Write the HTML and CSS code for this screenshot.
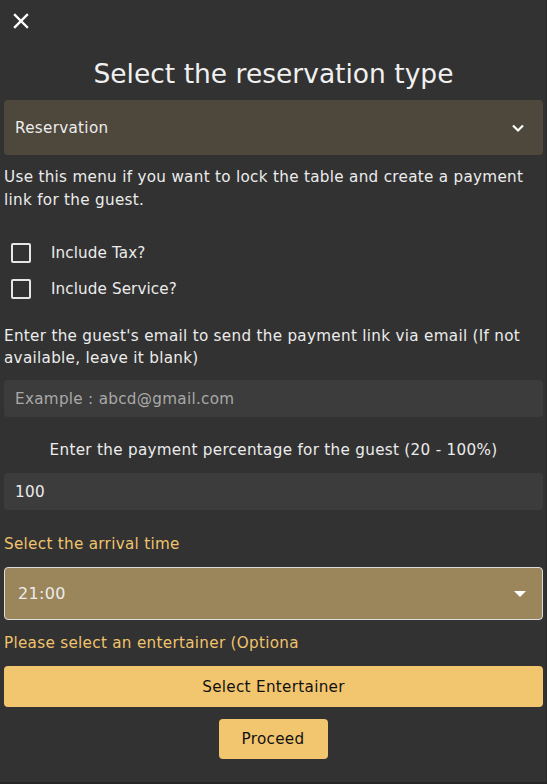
FILE: index.html
```html
<!DOCTYPE html>
<html>
<head>
    <meta charset="UTF-8">
    <title>Reservation type</title>
    <meta name="viewport" content="width=device-width, initial-scale=1.0">
    <link rel="stylesheet" href="styles.css">
</head>
<body>
    <div class="sheet">
        <div class="close">
            <svg width="16" height="16" viewBox="0 0 16 16">
                <path d="M2 2 L14 14 M14 2 L2 14" stroke="#fff" stroke-width="2.4" stroke-linecap="square"/>
            </svg>
        </div>

        <h1 class="title">Select the reservation type</h1>

        <div class="typeSelect">
            <span>Reservation</span>
            <svg width="14" height="10" viewBox="0 0 14 10">
                <path d="M2 2.5 L7 7.5 L12 2.5" fill="none" stroke="#fff" stroke-width="2.2"/>
            </svg>
        </div>

        <p class="text info">Use this menu if you want to lock the table and create a payment link for the guest.</p>

        <div class="checks">
            <label class="check"><span class="box"></span>Include Tax?</label>
            <label class="check"><span class="box"></span>Include Service?</label>
        </div>

        <p class="text emailText">Enter the guest's email to send the payment link via email (If not available, leave it blank)</p>
        <div class="field placeholder">Example : abcd@gmail.com</div>

        <p class="text centered">Enter the payment percentage for the guest (20 - 100%)</p>
        <div class="field">100</div>

        <p class="text gold arrival">Select the arrival time</p>
        <div class="timeSelect">
            <span>21:00</span>
            <svg width="12" height="7" viewBox="0 0 12 7">
                <path d="M0 0 L12 0 L6 6 Z" fill="#fff"/>
            </svg>
        </div>

        <p class="text gold entertainer">Please select an entertainer (Optiona</p>
        <div class="btnWide">Select Entertainer</div>
        <div class="proceedRow">
            <div class="btnProceed">Proceed</div>
        </div>
    </div>
</body>
</html>
```

FILE: styles.css
```css
*{
    box-sizing: border-box;
}
body{
    margin: 0;
    background-color: #323232;
    color: #ececec;
    font-family: "DejaVu Sans", sans-serif;
    font-size: 15.2px;
    letter-spacing: 0.3px;
    height: 784px;
    overflow: hidden;
    border-bottom: solid #262626 2px;
    border-right: solid #2a2a2a 1px;
}
.sheet{
    padding: 0 3px 0 4px;
}
.close{
    padding: 13px 0 0 9px;
    height: 29px;
}
.close svg{
    display: block;
}
.title{
    margin: 27px 0 8px 0;
    text-align: center;
    font-size: 26.5px;
    font-weight: normal;
    letter-spacing: 0;
    line-height: 36px;
    color: #f0f0f0;
}
.typeSelect{
    height: 55px;
    background-color: #4e473b;
    border-radius: 4px;
    display: flex;
    align-items: center;
    justify-content: space-between;
    padding: 0 18px 0 11px;
}
.text{
    margin: 0;
    line-height: 23px;
}
.info{
    margin-top: 11px;
}
.checks{
    margin-top: 23px;
}
.check{
    display: flex;
    align-items: center;
    height: 36px;
    letter-spacing: 0.1px;
}
.box{
    width: 20px;
    height: 20px;
    border: solid #e6e6e6 2px;
    border-radius: 2px;
    margin: 0 20px 0 7px;
}
.emailText{
    margin-top: 18px;
    line-height: 22px;
}
.field{
    height: 37px;
    background-color: #3c3c3c;
    border-radius: 4px;
    padding: 0 11px;
    display: flex;
    align-items: center;
    margin-top: 11px;
}
.placeholder{
    color: #a9a9a9;
}
.centered{
    text-align: center;
    margin-top: 22px;
}
.gold{
    color: #f0c36c;
}
.arrival{
    margin-top: 23px;
}
.timeSelect{
    margin-top: 11px;
    height: 53px;
    background-color: #9b855a;
    border: solid #dcdcdc 1px;
    border-radius: 4px;
    display: flex;
    align-items: center;
    justify-content: space-between;
    padding: 0 16px 0 13px;
    font-size: 16px;
}
.timeSelect svg{
    margin-top: 2px;
}
.entertainer{
    margin-top: 12px;
}
.btnWide{
    margin-top: 11px;
    height: 41px;
    background-color: #f2c56f;
    border-radius: 4px;
    color: #111;
    display: flex;
    align-items: center;
    justify-content: center;
}
.proceedRow{
    display: flex;
    justify-content: center;
    margin-top: 12px;
}
.btnProceed{
    width: 109px;
    height: 40px;
    background-color: #f2c56f;
    border-radius: 4px;
    color: #111;
    display: flex;
    align-items: center;
    justify-content: center;
    margin-right: 1px;
}
```
